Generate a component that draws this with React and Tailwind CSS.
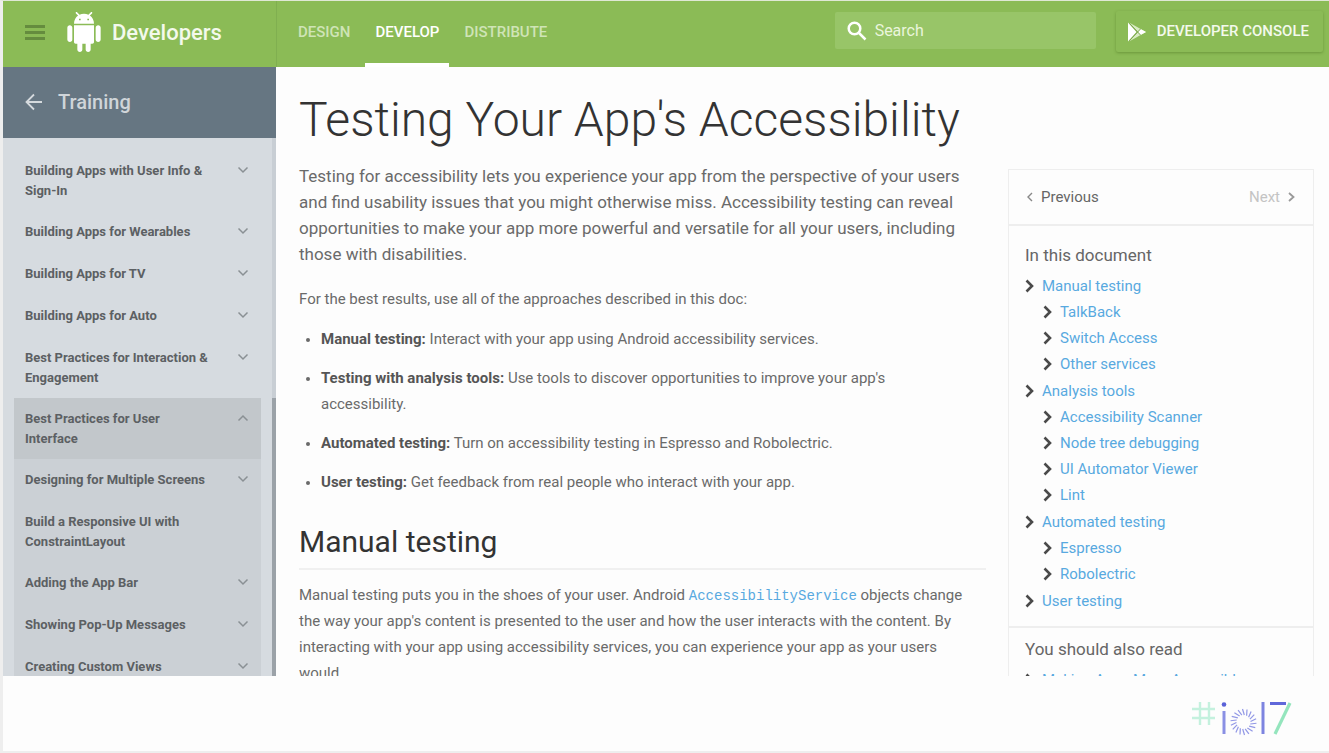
import React from "react";

const sidebarItems = [
  { label: "Building Apps with User Info & Sign-In" },
  { label: "Building Apps for Wearables" },
  { label: "Building Apps for TV" },
  { label: "Building Apps for Auto" },
  { label: "Best Practices for Interaction & Engagement" },
];

const sectionItems = [
  { label: "Designing for Multiple Screens", expandable: true },
  { label: "Build a Responsive UI with ConstraintLayout", expandable: false },
  { label: "Adding the App Bar", expandable: true },
  { label: "Showing Pop-Up Messages", expandable: true },
  { label: "Creating Custom Views", expandable: true },
];

const toc = [
  { label: "Manual testing", children: ["TalkBack", "Switch Access", "Other services"] },
  {
    label: "Analysis tools",
    children: ["Accessibility Scanner", "Node tree debugging", "UI Automator Viewer", "Lint"],
  },
  { label: "Automated testing", children: ["Espresso", "Robolectric"] },
  { label: "User testing", children: [] },
];

const approaches = [
  ["Manual testing:", "Interact with your app using Android accessibility services."],
  ["Testing with analysis tools:", "Use tools to discover opportunities to improve your app's accessibility."],
  ["Automated testing:", "Turn on accessibility testing in Espresso and Robolectric."],
  ["User testing:", "Get feedback from real people who interact with your app."],
];

function AndroidLogo() {
  return (
    <svg viewBox="0 0 24 24" className="h-10 w-10 fill-white" aria-hidden="true">
      <path d="M6 18c0 .55.45 1 1 1h1v3.5c0 .83.67 1.5 1.5 1.5s1.5-.67 1.5-1.5V19h2v3.5c0 .83.67 1.5 1.5 1.5s1.5-.67 1.5-1.5V19h1c.55 0 1-.45 1-1V8H6v10zM3.5 8C2.67 8 2 8.67 2 9.5v7c0 .83.67 1.5 1.5 1.5S5 17.33 5 16.5v-7C5 8.67 4.33 8 3.5 8zm17 0c-.83 0-1.5.67-1.5 1.5v7c0 .83.67 1.5 1.5 1.5s1.5-.67 1.5-1.5v-7c0-.83-.67-1.5-1.5-1.5zm-4.97-5.84l1.3-1.3c.2-.2.2-.51 0-.71-.2-.2-.51-.2-.71 0l-1.48 1.48C13.85 1.23 12.95 1 12 1c-.96 0-1.86.23-2.66.63L7.85.15c-.2-.2-.51-.2-.71 0-.2.2-.2.51 0 .71l1.31 1.31C6.97 3.26 6 5.01 6 7h12c0-1.99-.97-3.75-2.47-4.84zM10 5H9V4h1v1zm5 0h-1V4h1v1z" />
    </svg>
  );
}

function Chevron({ up = false }) {
  return (
    <svg viewBox="0 0 12 8" className="mt-[5px] h-2 w-3 shrink-0 fill-none stroke-[#8a9094]" strokeWidth="1.5" aria-hidden="true">
      <path d={up ? "M1.5 6.5 6 2l4.5 4.5" : "M1.5 1.5 6 6l4.5-4.5"} />
    </svg>
  );
}

function TocArrow() {
  return (
    <svg viewBox="0 0 9 14" className="h-3.5 w-[9px] shrink-0 fill-none stroke-[#4a4a4a]" strokeWidth="2.6" aria-hidden="true">
      <path d="M1.5 1.5 7 7l-5.5 5.5" />
    </svg>
  );
}

function SidebarRow({ label, expandable = true, active = false }) {
  return (
    <li className={active ? "bg-[#c2c7cb]" : ""}>
      <button
        type="button"
        className="flex min-h-[42px] w-full items-start justify-between pt-[11px] pr-3 pb-2.5 pl-[11px] text-left text-[13px] leading-5 font-bold text-[#5c6063]"
      >
        <span className="w-[190px]">{label}</span>
        {expandable && <Chevron up={active} />}
      </button>
    </li>
  );
}

function TocLink({ children }) {
  return (
    <a href="#section" className="flex items-center gap-2 text-[#58a9e0]">
      <TocArrow />
      {children}
    </a>
  );
}

function EventLogo() {
  const rays = Array.from({ length: 18 }, (_, i) => i * 20);
  return (
    <svg viewBox="0 0 102 38" className="h-[38px] w-[102px] fill-none" role="img" aria-label="#io17">
      <g stroke="#c4f1de" strokeWidth="2.4">
        <path d="M8 2v23M17 2v23M0 9h23M0 18h23" />
      </g>
      <circle cx="32" cy="4.500" r="2.3" fill="#5a62d8" />
      <path d="M32 11v23" stroke="#8a90e4" strokeWidth="3" />
      <g stroke="#9298e6" strokeWidth="1.2">
        {rays.map((a) => (
          <path key={a} d="M50.500 9l1.800 6" transform={`rotate(${a} 51.500 22)`} />
        ))}
      </g>
      <path d="M71 2v32" stroke="#7d84e0" strokeWidth="3" />
      <path d="M98 3 83 34" stroke="#94e5bd" strokeWidth="3.200" />
      <path d="M78 3.500h16" stroke="#6068da" strokeWidth="3" />
    </svg>
  );
}

function Header() {
  return (
    <header className="flex h-[66px] shrink-0 bg-[#8bbb56] text-white">
      <div className="flex w-[274px] shrink-0 items-center border-r border-[#80af50] pb-1 pl-[22px]">
        <button type="button" aria-label="Menu" className="flex w-5 flex-col gap-[3px]">
          <span className="h-[3px] bg-[#658c3e]" />
          <span className="h-[3px] bg-[#658c3e]" />
          <span className="h-[3px] bg-[#658c3e]" />
        </button>
        <a href="#home" className="flex items-center gap-2 pl-[19px] text-[22px] font-medium text-[#f3f9ec]">
          <AndroidLogo />
          Developers
        </a>
      </div>
      <nav className="ml-[11px] flex flex-1 gap-[5px] text-[15px] leading-6 font-medium text-[#cfe4b6]">
        <a href="#design" className="border-b-4 border-transparent px-2.5 pt-[19px]">DESIGN</a>
        <a href="#develop" className="border-b-4 border-white px-2.5 pt-[19px] text-white">DEVELOP</a>
        <a href="#distribute" className="border-b-4 border-transparent px-2.5 pt-[19px]">DISTRIBUTE</a>
      </nav>
      <label className="mt-[11px] flex h-[37px] w-[261px] items-center gap-2 rounded-xs bg-[#98c568] pl-3">
        <svg viewBox="0 0 20 20" className="h-5 w-5 fill-none stroke-white" strokeWidth="2.5" aria-hidden="true">
          <circle cx="7.500" cy="7.500" r="5.800" />
          <path d="M12 12l6.500 6.500" />
        </svg>
        <input type="search" aria-label="Search" placeholder="Search" className="w-0 flex-1 bg-transparent text-base text-white outline-none placeholder:text-[#eaf5dc]" />
      </label>
      <button type="button" className="mt-2.5 mr-1.5 ml-5 flex h-[41px] items-center gap-2.5 rounded-xs pr-3.5 pl-[11px] text-[15px] font-medium text-[#f3f9ec] shadow-[0_1px_3px_rgba(60,100,20,0.4)]">
        <svg viewBox="0 0 20 20" className="h-5 w-5" aria-hidden="true">
          <path d="M1 0.500v19l8.500-9.500z" fill="#fff" />
          <path d="M2.500 0.800 19 10 2.500 19.200 11 10z" fill="#d9ebc4" />
          <path d="M13.500 7 19 10l-5.500 3-2.500-3z" fill="#fff" />
          <path d="M2.500 1.500 13.500 13M2.500 18.500 13.500 7" stroke="#7da64e" strokeWidth="1" />
        </svg>
        DEVELOPER CONSOLE
      </button>
    </header>
  );
}

function Sidebar() {
  return (
    <aside className="flex w-[273px] shrink-0 flex-col bg-[#d6dbe0]">
      <a href="#training" className="flex h-[71px] shrink-0 items-center gap-3.5 bg-[#667682] pb-0.5 pl-[21px] text-xl font-medium text-[#cfd5d9]">
        <svg viewBox="0 0 20 20" className="h-5 w-5 fill-none stroke-[#d5dadd]" strokeWidth="1.8" aria-hidden="true">
          <path d="M18 10H2.500M10 2.500 2.500 10l7.500 7.500" />
        </svg>
        Training
      </a>
      <div className="flex min-h-0 flex-1 justify-between overflow-hidden">
        <nav className="ml-[11px] w-[247px] pt-3">
          <ul>
            {sidebarItems.map((item) => (
              <SidebarRow key={item.label} {...item} />
            ))}
            <SidebarRow label="Best Practices for User Interface" active />
          </ul>
          <ul className="bg-[#cbd0d5]">
            {sectionItems.map((item) => (
              <SidebarRow key={item.label} {...item} />
            ))}
          </ul>
        </nav>
        <div className="w-1 bg-[#c8ced4] pt-[260px]">
          <div className="h-[400px] bg-[#9ba2a8]" />
        </div>
      </div>
    </aside>
  );
}

function Article() {
  return (
    <article className="min-w-0 flex-1 pl-[23px] text-[15px] leading-[26px] text-[#6a6a6a]">
      <p className="text-[17px]">
        Testing for accessibility lets you experience your app from the perspective of your users and find usability
        issues that you might otherwise miss. Accessibility testing can reveal opportunities to make your app more
        powerful and versatile for all your users, including those with disabilities.
      </p>
      <p className="mt-[19px]">For the best results, use all of the approaches described in this doc:</p>
      <ul className="mt-3.5 flex list-disc flex-col gap-[13px] pr-5 pl-[22px] marker:text-sm">
        {approaches.map(([name, text]) => (
          <li key={name}>
            <b className="font-bold text-[#555]">{name}</b> {text}
          </li>
        ))}
      </ul>
      <h2 className="mt-[27px] border-b-2 border-[#f0f0f0] pb-1.5 text-3xl leading-10 text-[#333]">Manual testing</h2>
      <p className="mt-3 pr-5">
        Manual testing puts you in the shoes of your user. Android{" "}
        <a href="#service" className="font-['Liberation_Mono',monospace] text-sm text-[#58a9e0]">AccessibilityService</a>{" "}
        objects change the way your app's content is presented to the user and how the user interacts with the content.
        By interacting with your app using accessibility services, you can experience your app as your users would.
      </p>
    </article>
  );
}

function DocPanel() {
  return (
    <aside className="mt-1.5 mr-[15px] ml-[22px] w-[306px] shrink-0 border border-[#eee] text-[15px] leading-[26px] text-[#666]">
      <div className="flex h-14 items-center justify-between border-b-2 border-[#eee] pr-[18px] pl-[18px]">
        <a href="#previous" className="flex items-center gap-2">
          <svg viewBox="0 0 6 10" className="h-2.5 w-1.5 fill-none stroke-[#888]" strokeWidth="1.4" aria-hidden="true">
            <path d="M5 1 1 5l4 4" />
          </svg>
          Previous
        </a>
        <a href="#next" className="flex items-center gap-2 text-[#c4c4c4]">
          Next
          <svg viewBox="0 0 7 10" className="h-2.5 w-[7px] fill-none stroke-[#999]" strokeWidth="1.8" aria-hidden="true">
            <path d="M1 1l4.500 4L1 9" />
          </svg>
        </a>
      </div>
      <div className="border-b-2 border-[#eee] px-4 pt-4 pb-3">
        <h2 className="mb-[5px] text-[17px] leading-[26px]">In this document</h2>
        <ul>
          {toc.map((entry) => (
            <li key={entry.label}>
              <TocLink>{entry.label}</TocLink>
              {entry.children.length > 0 && (
                <ul className="mb-px pl-[18px]">
                  {entry.children.map((child) => (
                    <li key={child}>
                      <TocLink>{child}</TocLink>
                    </li>
                  ))}
                </ul>
              )}
            </li>
          ))}
        </ul>
      </div>
      <div className="px-4 pt-2">
        <h2 className="mb-[5px] text-[17px] leading-[26px]">You should also read</h2>
        <TocLink>Making Apps More Accessible</TocLink>
      </div>
    </aside>
  );
}

export default function App() {
  return (
    <div className="flex h-screen flex-col border-t border-b-2 border-l-[3px] border-t-[#dfe8d5] border-b-[#eee] border-l-[#eee] bg-[#fdfdfd] font-[Roboto,sans-serif]">
      <Header />
      <div className="flex min-h-0 flex-1 overflow-hidden">
        <Sidebar />
        <main className="min-w-0 flex-1 overflow-hidden pt-[19px]">
          <h1 className="pl-[23px] text-5xl leading-[68px] font-light text-[#333]">Testing Your App's Accessibility</h1>
          <div className="flex items-start pt-[9px]">
            <Article />
            <DocPanel />
          </div>
        </main>
      </div>
      <footer className="flex h-[75px] shrink-0 justify-end pt-6 pr-[35px]">
        <EventLogo />
      </footer>
    </div>
  );
}
